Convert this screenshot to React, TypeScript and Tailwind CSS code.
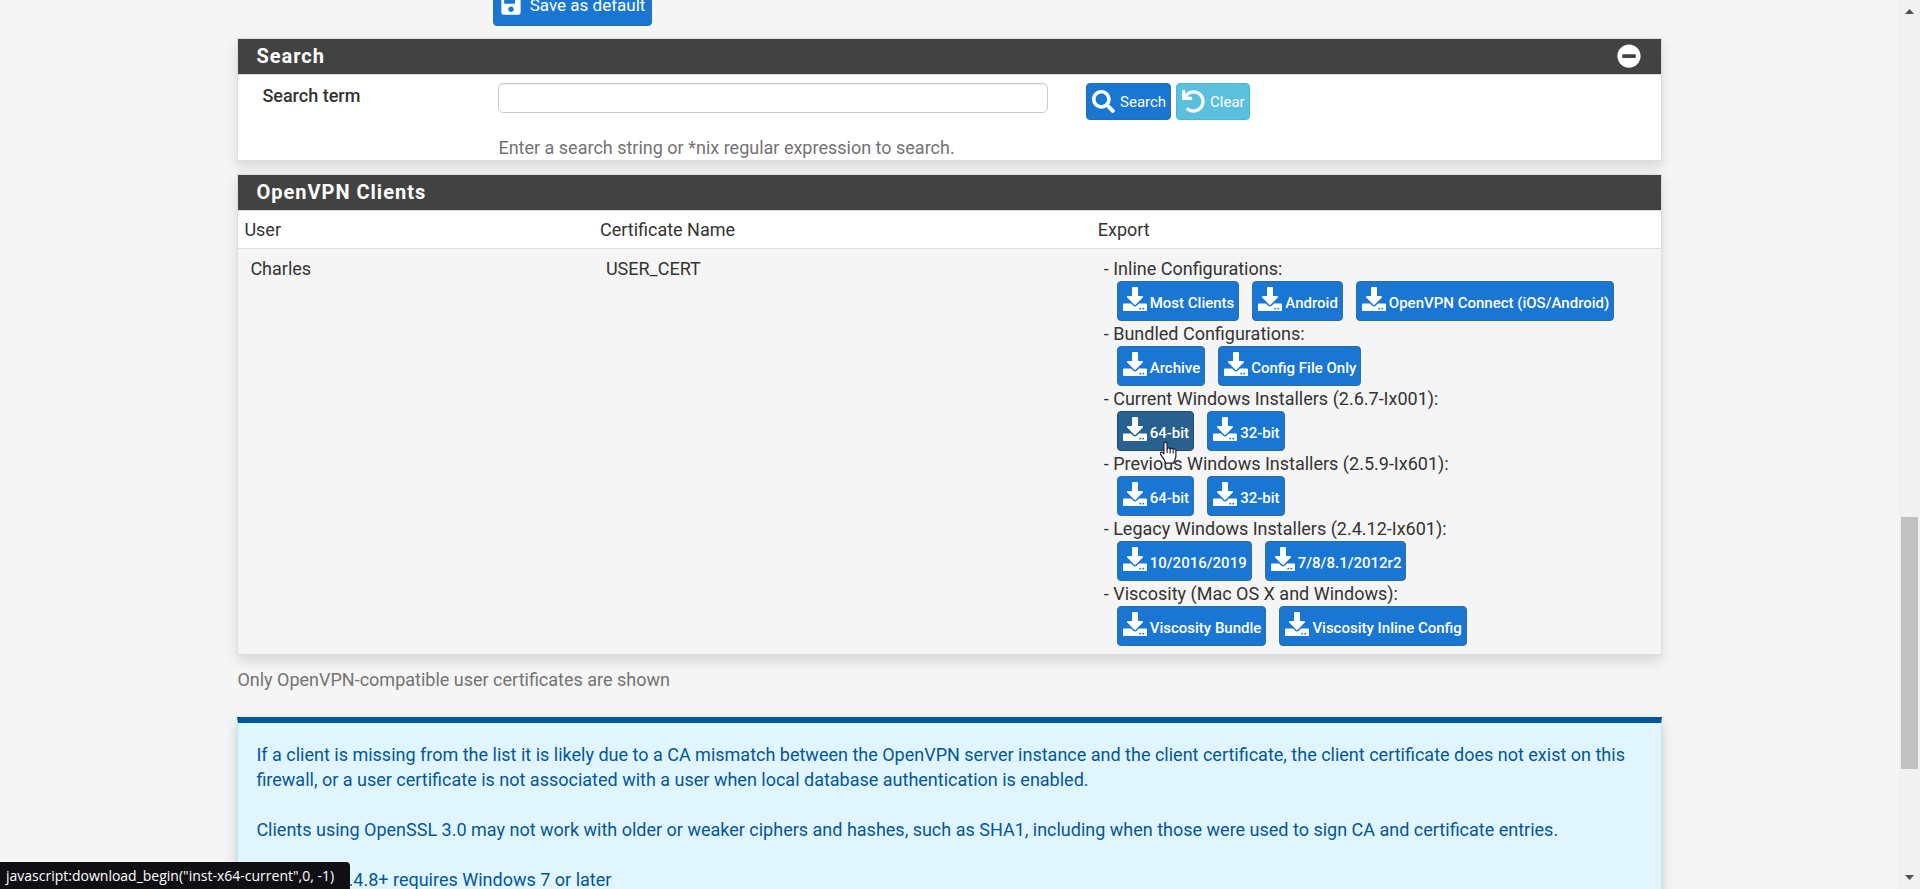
import { FaSearch, FaMinusCircle, FaDownload, FaSave, FaUndo } from "react-icons/fa";

type ExportItem = { label: string; active?: boolean };
type ExportGroup = { title: string; items: ExportItem[] };

const groups: ExportGroup[] = [
  { title: "Inline Configurations", items: [{ label: "Most Clients" }, { label: "Android" }, { label: "OpenVPN Connect (iOS/Android)" }] },
  { title: "Bundled Configurations", items: [{ label: "Archive" }, { label: "Config File Only" }] },
  { title: "Current Windows Installers (2.6.7-Ix001)", items: [{ label: "64-bit", active: true }, { label: "32-bit" }] },
  { title: "Previous Windows Installers (2.5.9-Ix601)", items: [{ label: "64-bit" }, { label: "32-bit" }] },
  { title: "Legacy Windows Installers (2.4.12-Ix601)", items: [{ label: "10/2016/2019" }, { label: "7/8/8.1/2012r2" }] },
  { title: "Viscosity (Mac OS X and Windows)", items: [{ label: "Viscosity Bundle" }, { label: "Viscosity Inline Config" }] },
];

const panel = "border border-[#dddddd] bg-white shadow-[0_6px_12px_rgba(0,0,0,0.12)]";
const heading = "flex h-9 items-center justify-between border-b border-[#dddddd] bg-[#424242] pr-5 pb-px pl-[18px] text-white";
const headingText = "text-[20px] leading-6 font-bold tracking-[1px]";
const searchButton = "flex h-[37px] items-center gap-[5px] rounded-[4px] border pr-1 pl-[5px] text-[15px] text-white";

function Pointer() {
  return (
    <svg viewBox="0 0 17 23" className="pointer-events-none absolute top-[29px] left-[42px] z-10 h-[23px] w-[17px]" aria-hidden="true">
      <path
        d="M5.5 1.2c-1 0-1.6.7-1.6 1.6v10l-1.200-1.200c-.8-.7-1.800-.6-2.200 0-.4.6-.2 1.400.3 2.100l3.400 5c.8 1.300 1.300 2 1.300 3.500h8.300c0-1.400.4-2 1-3.200.6-1.200 1.100-2.400 1.100-4.200V9.500c0-1.900-2.400-2-2.700-.5 0-2-2.600-2.300-3-.6 0-1.900-2.600-2.100-3.100-.6V2.800c0-.9-.7-1.600-1.600-1.600z"
        fill="#fff"
        stroke="#1b1b2b"
        strokeWidth="1.200"
        strokeLinejoin="round"
      />
      <path d="M7.100 7.500v4.500M10.200 8.500v3.700M13.200 9.500v3" stroke="#1b1b2b" strokeWidth="1.100" fill="none" />
    </svg>
  );
}

function ExportButton({ label, active }: ExportItem) {
  return (
    <a
      href="#download"
      className={
        "relative flex h-10 items-center gap-[3px] rounded-[4px] border pt-[5px] pr-1 pl-[5px] text-[15px] leading-6 font-medium text-white " +
        (active ? "border-[#204d74] bg-[#286090]" : "border-[#2e6da4] bg-[#1976d2]")
      }
    >
      <FaDownload className="mb-2 size-6" />
      {label}
      {active && <Pointer />}
    </a>
  );
}

function ScrollBar() {
  return (
    <div className="fixed inset-y-0 right-0 flex w-[21px] flex-col items-center justify-between bg-[#f1f1f1] py-[9px]" aria-hidden="true">
      <svg viewBox="0 0 9 5" className="h-[5px] w-[9px]"><path d="M4.500 0L9 5H0z" fill="#505050" /></svg>
      <div className="absolute top-[517px] h-[252px] w-[17px] bg-[#c1c1c1]" />
      <svg viewBox="0 0 9 5" className="h-[5px] w-[9px]"><path d="M0 0h9L4.500 5z" fill="#505050" /></svg>
    </div>
  );
}

export default function App() {
  return (
    <div className="h-screen overflow-hidden bg-[#f5f5f5] pr-[21px] font-[Roboto,sans-serif] text-[18px] leading-[25px] text-[#333333]">
      <main className="mx-auto w-3/4">
        <div className="grid grid-cols-12">
          <button type="button" className="col-start-3 -mt-[14px] ml-[18px] flex h-10 w-max items-center gap-2 rounded-[4px] border border-[#2e6da4] bg-[#1976d2] px-[6px] pb-[2px] text-[17px] leading-6 text-white">
            <FaSave className="size-[22px]" />
            Save as default
          </button>
        </div>

        <section className={panel + " mt-3"}>
          <div className={heading}>
            <h2 className={headingText}>Search</h2>
            <button type="button" aria-label="Collapse search"><FaMinusCircle className="size-6" /></button>
          </div>
          <div className="grid h-[85px] grid-cols-12">
            <label htmlFor="term" className="col-span-2 pt-2 pl-6 font-medium">Search term</label>
            <div className="col-span-5 pt-2 pr-5 pl-[23px]">
              <input id="term" type="text" className="block h-[30px] w-full rounded-[5px] border border-[#cccccc] bg-white px-3 shadow-[inset_0_1px_1px_rgba(0,0,0,0.075)]" />
              <p className="mt-[22px] whitespace-nowrap text-[#737373]">Enter a search string or *nix regular expression to search.</p>
            </div>
            <div className="col-span-5 flex gap-[5px] pt-2 pl-[18px]">
              <button type="button" className={searchButton + " border-[#2e6da4] bg-[#1976d2]"}>
                <FaSearch className="size-[23px]" />
                <span className="pt-px">Search</span>
              </button>
              <button type="button" className={searchButton + " border-[#46b8da] bg-[#5bc0de]"}>
                <FaUndo className="size-[23px]" />
                <span className="pt-px">Clear</span>
              </button>
            </div>
          </div>
        </section>

        <section className={panel + " mt-[13px]"}>
          <div className={heading}>
            <h2 className={headingText}>OpenVPN Clients</h2>
          </div>
          <table className="w-full table-fixed border-collapse text-left">
            <thead>
              <tr className="h-[37px] border-b border-[#dddddd]">
                <th className="w-1/4 pl-[6px] font-normal">User</th>
                <th className="w-[35%] pl-[6px] font-normal">Certificate Name</th>
                <th className="w-2/5 pl-[6px] font-normal">Export</th>
              </tr>
            </thead>
            <tbody>
              <tr className="bg-[#f5f5f5] align-top">
                <td className="pt-[7px] pl-3">Charles</td>
                <td className="pt-[7px] pl-3">USER_CERT</td>
                <td className="pt-[7px] pb-2 pl-3">
                  {groups.map((group) => (
                    <div key={group.title}>
                      - {group.title}:
                      <div className="flex gap-[13px] pl-[13px]">
                        {group.items.map((item) => (
                          <ExportButton key={item.label} {...item} />
                        ))}
                      </div>
                    </div>
                  ))}
                </td>
              </tr>
            </tbody>
          </table>
        </section>

        <p className="mt-3 text-[#737373]">Only OpenVPN-compatible user certificates are shown</p>

        <section className="mt-[25px] border border-t-[6px] border-[#b2ebf2] border-t-[#01579b] bg-[#e1f5fe] px-[18px] pt-[19px] pb-12 text-[#01579b] shadow-[0_6px_12px_rgba(0,0,0,0.175)]">
          <p>
            If a client is missing from the list it is likely due to a CA mismatch between the OpenVPN server instance and the client certificate, the client certificate does not exist on this firewall, or a user certificate is not associated with a user when local database authentication is enabled.
          </p>
          <p className="mt-[25px]">
            Clients using OpenSSL 3.0 may not work with older or weaker ciphers and hashes, such as SHA1, including when those were used to sign CA and certificate entries.
          </p>
          <p className="mt-[25px]">OpenVPN 2.4.8+ requires Windows 7 or later</p>
        </section>
      </main>
      <div className="fixed bottom-0 left-0 rounded-tr-[4px] bg-[#101014] pr-4 pl-[6px] font-['Open_Sans',sans-serif] text-[14px] leading-[27px] text-white">
        javascript:download_begin("inst-x64-current",0, -1)
      </div>
      <ScrollBar />
    </div>
  );
}
